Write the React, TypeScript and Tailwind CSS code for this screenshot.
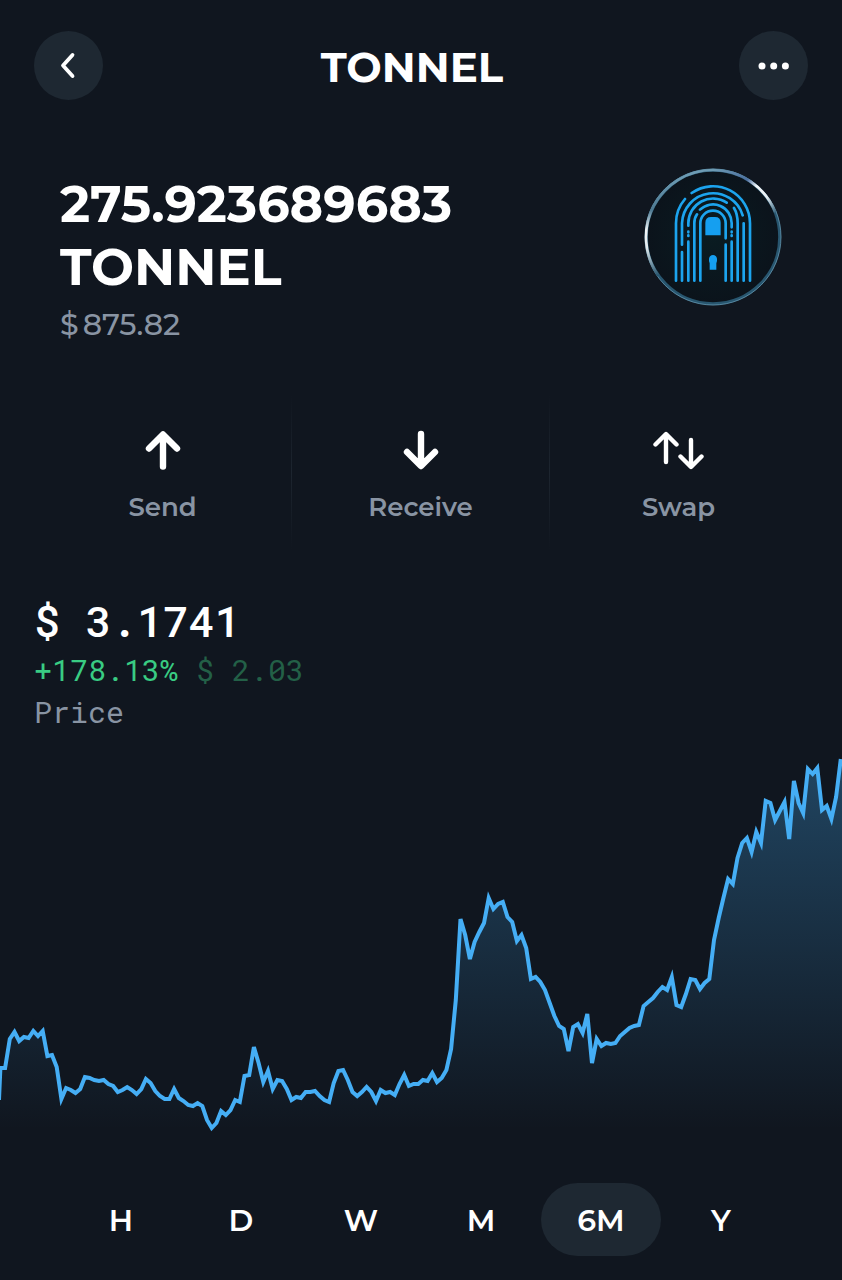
import React, { useState } from 'react';

const prices = [
  1068, 1068, 1039, 1032, 1041, 1037, 1038, 1031, 1036, 1031, 1056, 1055, 1067, 1099, 1088, 1090, 1093, 1089,
  1077, 1078, 1080, 1081, 1080, 1084, 1086, 1092, 1090, 1087, 1090, 1094, 1089, 1079, 1083, 1091, 1096, 1099,
  1099, 1089, 1098, 1101, 1105, 1106, 1103, 1106, 1120, 1128, 1123, 1111, 1115, 1110, 1100, 1102, 1076, 1075,
  1047, 1063, 1082, 1071, 1089, 1080, 1081, 1089, 1100, 1097, 1098, 1092, 1092, 1091, 1096, 1100, 1102, 1083,
  1071, 1070, 1080, 1092, 1096, 1092, 1087, 1092, 1101, 1090, 1093, 1092, 1095, 1084, 1075, 1086, 1084, 1084,
  1080, 1081, 1073, 1082, 1078, 1070, 1049, 1000, 919, 935, 959, 942, 932, 923, 898, 909, 904, 902, 917, 922,
  941, 935, 948, 979, 977, 982, 990, 1003, 1016, 1026, 1029, 1051, 1027, 1024, 1033, 1014, 1063, 1039, 1046,
  1043, 1044, 1043, 1036, 1032, 1028, 1026, 1025, 1006, 1002, 998, 992, 987, 990, 977, 1005, 1007, 994, 979,
  980, 989, 983, 979, 940, 918, 898, 879, 884, 858, 843, 838, 852, 832, 843, 801, 803, 820, 811, 802, 839, 781,
  803, 813, 769, 774, 768, 810, 806, 819, 797, 759,
];

const linePath = 'M-1 1100 ' + prices.map((y, i) => `L${(i * 4.695 + 0.4).toFixed(1)} ${y}`).join(' ');
const areaPath = `${linePath} H843 V1140 H-1 Z`;

const ranges = ['H', 'D', 'W', 'M', '6M', 'Y'];

const SendIcon = () => (
  <svg viewBox="0 0 40 40" className="h-10 w-10" fill="none" stroke="currentColor" strokeWidth="6.400" strokeLinecap="round" strokeLinejoin="round">
    <path d="M20 36.500V5M6 18.500L20 4.500L34 18.500" />
  </svg>
);

const ReceiveIcon = () => (
  <svg viewBox="0 0 40 40" className="h-10 w-10" fill="none" stroke="currentColor" strokeWidth="6.400" strokeLinecap="round" strokeLinejoin="round">
    <path d="M20 4V35M6 22L20 36L34 22" />
  </svg>
);

const SwapIcon = () => (
  <svg viewBox="0 0 52 40" className="h-10 w-[52px]" fill="none" stroke="currentColor" strokeWidth="4.400" strokeLinecap="round" strokeLinejoin="round">
    <path d="M13 32V4.500M2.500 14.500L13 4L23.500 14.500" />
    <path d="M38 10V36.500M27.500 26.500L38 37L48.500 26.500" />
  </svg>
);

const actions = [
  { label: 'Send', icon: <SendIcon /> },
  { label: 'Receive', icon: <ReceiveIcon /> },
  { label: 'Swap', icon: <SwapIcon /> },
];

const TokenLogo = () => (
  <svg viewBox="42 38 414 414" className="h-[138px] w-[138px] shrink-0" role="img" aria-label="Tonnel">
    <defs>
      <radialGradient id="coin">
        <stop offset="0" stopColor="#0a1c22" />
        <stop offset="1" stopColor="#0b131b" />
      </radialGradient>
      <linearGradient id="rimLeft" gradientUnits="userSpaceOnUse" x1="0" y1="60" x2="0" y2="360">
        <stop offset="0" stopColor="#6d9bb3" />
        <stop offset="0.350" stopColor="#4f7a92" />
        <stop offset="0.550" stopColor="#f2f6f8" />
        <stop offset="0.720" stopColor="#e4ecf0" />
        <stop offset="1" stopColor="#28566f" />
      </linearGradient>
      <linearGradient id="rimRight" gradientUnits="userSpaceOnUse" x1="249" y1="44" x2="436" y2="170">
        <stop offset="0" stopColor="#6d9bb3" />
        <stop offset="0.450" stopColor="#4d6fa0" />
        <stop offset="0.600" stopColor="#f5f8fa" />
        <stop offset="0.800" stopColor="#e8eff3" />
        <stop offset="1" stopColor="#3f6b84" />
      </linearGradient>
    </defs>
    <circle cx="249" cy="245" r="200" fill="url(#coin)" stroke="#28566f" strokeWidth="9" />
    <circle cx="249" cy="245" r="204" fill="none" stroke="#6fa3bd" strokeWidth="2" />
    <g fill="none" strokeWidth="8">
      <path d="M85 361A201 201 0 0 1 249 44" stroke="url(#rimLeft)" />
      <path d="M249 44A201 201 0 0 1 436 171" stroke="url(#rimRight)" />
    </g>
    <g fill="none" stroke="#1ca4ee" strokeWidth="8" strokeLinecap="round">
      <path d="M138 376V204A111 111 0 0 1 165 131" />
      <path d="M185 113A111 111 0 0 1 360 204V376" />
      <path d="M156 268V204A93 93 0 0 1 338 180M156 290V376M341 204V376" />
      <path d="M175 211V204A74 74 0 0 1 290 142M312 158Q323 176 323 204V376" />
      <path d="M175 229V231M175 240V242M175 259V376" />
      <path d="M193 376V204Q193 188 201 177M210 163A56 56 0 0 1 305 204V216" />
      <path d="M305 229V231M305 240V242M305 259V376" />
      <path d="M211 376V204A38 38 0 0 1 287 204V249M287 268V376" />
    </g>
    <g fill="#159ff0">
      <path d="M226 240V202Q226 185 243 185H255Q272 185 272 202V240Z" />
      <path d="M239 343V324Q236 318 237 310Q239 299 249 299Q259 299 261 310Q262 318 259 324V343Z" />
    </g>
  </svg>
);

const PriceChart = () => (
  <svg viewBox="0 734 842 449" preserveAspectRatio="none" className="block h-[449px] w-full" role="img" aria-label="Price chart">
    <defs>
      <linearGradient id="area" gradientUnits="userSpaceOnUse" x1="0" y1="759" x2="0" y2="1130">
        <stop offset="0" stopColor="#45aef5" stopOpacity="0.31" />
        <stop offset="1" stopColor="#45aef5" stopOpacity="0" />
      </linearGradient>
    </defs>
    <path d={areaPath} fill="url(#area)" />
    <path d={linePath} fill="none" stroke="#45aef5" strokeWidth="4" vectorEffect="non-scaling-stroke" />
  </svg>
);

const Divider = () => (
  <div className="w-px bg-gradient-to-b from-transparent via-[#1d252f] to-transparent" />
);

const App = () => {
  const [range, setRange] = useState('6M');

  return (
    <main className="flex min-h-screen flex-col bg-[#10161f] pb-6 font-['Montserrat','Inter',sans-serif] text-white">
      <header className="flex items-center justify-between px-[34px] pt-[31px]">
        <button aria-label="Back" className="flex size-[69px] items-center justify-center rounded-full bg-[#1e2832]">
          <svg viewBox="0 0 28 28" className="size-7" fill="none" stroke="currentColor" strokeWidth="3.800" strokeLinecap="round" strokeLinejoin="round">
            <path d="M17.500 3L8 13.500L17.500 24" />
          </svg>
        </button>
        <h1 className="pt-0.5 pr-[18px] text-[42px] leading-[56px] font-bold">TONNEL</h1>
        <button aria-label="More" className="flex size-[69px] items-center justify-center rounded-full bg-[#1e2832]">
          <svg viewBox="0 0 32 8" className="h-2 w-8" fill="currentColor">
            <circle cx="4" cy="4" r="3.500" />
            <circle cx="15.700" cy="4" r="3.500" />
            <circle cx="27.400" cy="4" r="3.500" />
          </svg>
        </button>
      </header>

      <section className="mt-[68px] flex items-start justify-between px-[60px]">
        <div className="pt-[5px]">
          <p className="text-[51px] leading-[63px] font-bold">275.923689683</p>
          <p className="text-[51px] leading-[63px] font-bold">TONNEL</p>
          <p className="mt-1.5 flex gap-1 text-[30px] leading-10 font-medium text-[#8994a3]">
            <span>$</span>
            <span>875.82</span>
          </p>
        </div>
        <TokenLogo />
      </section>

      <nav className="mt-[50px] flex h-[155px] pr-[35px] pl-[34px]">
        {actions.map((action, index) => (
          <React.Fragment key={action.label}>
            {index > 0 && <Divider />}
            <button className="flex flex-1 flex-col items-center gap-4 pt-[35px]">
              {action.icon}
              <span className="text-[26px] leading-[42px] font-semibold text-[#8994a3]">{action.label}</span>
            </button>
          </React.Fragment>
        ))}
      </nav>

      <section className="mt-[43px] px-[34px] pb-px font-['Roboto_Mono','DejaVu_Sans_Mono',monospace]">
        <p className="text-[43px] leading-[56px] font-medium">$ 3.1741</p>
        <p className="text-[30px] leading-[42px] text-[#39cc83]">
          +178.13% <span className="text-[#236047]">$ 2.03</span>
        </p>
        <p className="text-[30px] leading-[42px] text-[#8994a3]">Price</p>
      </section>

      <PriceChart />

      <div className="grid grid-cols-6 px-[61px]">
        {ranges.map((item) => (
          <button
            key={item}
            onClick={() => setRange(item)}
            aria-pressed={range === item}
            className={`h-[73px] rounded-full pt-0.5 text-[30px] font-semibold ${range === item ? 'bg-[#1e2832]' : ''}`}
          >
            {item}
          </button>
        ))}
      </div>
    </main>
  );
};

export default App;
